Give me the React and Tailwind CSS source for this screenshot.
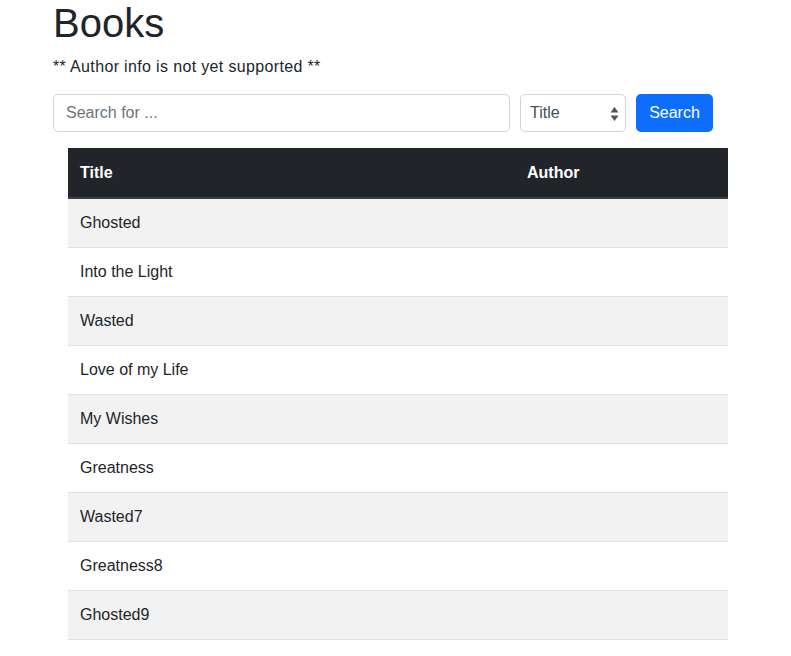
const BOOKS = ["Ghosted", "Into the Light", "Wasted", "Love of my Life", "My Wishes", "Greatness", "Wasted7", "Greatness8", "Ghosted9"];

export default function App() {
  return (
    <div className="min-h-screen bg-white text-[#212529] font-['Liberation_Sans',Arial,sans-serif]">
      <div className="pl-[53px] pr-[78px]">
        <h1 className="-mt-px mb-2 text-[40px] leading-[1.2] font-medium">Books</h1>
        <p className="mb-[15px] text-base leading-6 tracking-[0.35px]">** Author info is not yet supported **</p>

        <div className="flex items-center gap-[10px]">
          <input
            type="text"
            placeholder="Search for ..."
            className="w-[457px] h-[38px] px-3 text-base border border-[#ced4da] rounded-[5px] bg-white placeholder:text-[#6c757d] outline-none"
          />
          <div className="relative w-[106px] h-[38px] border border-[#ced4da] rounded-[5px] bg-white flex items-center px-[9px] text-base text-[#495057]">
            <span>Title</span>
            <svg className="absolute right-[6px] top-[12px]" width="9" height="14" viewBox="0 0 9 14">
              <path d="M4.5 0 L8.5 5.5 L0.5 5.5 Z" fill="#555" />
              <path d="M4.5 14 L8.5 8.5 L0.5 8.5 Z" fill="#555" />
            </svg>
          </div>
          <button className="w-[77px] h-[38px] rounded-[5px] bg-[#0d6efd] text-white text-base">Search</button>
        </div>

        <table className="mt-4 ml-[15px] w-[660px] border-collapse text-base">
          <thead>
            <tr className="bg-[#212529] text-white">
              <th className="w-[447px] h-[50px] px-3 text-left font-bold border-b-2 border-[#3a3f44]">Title</th>
              <th className="h-[50px] px-3 text-left font-bold border-b-2 border-[#3a3f44]">Author</th>
            </tr>
          </thead>
          <tbody>
            {BOOKS.map((b, i) => (
              <tr key={b} className={i % 2 === 0 ? "bg-[#f2f2f2]" : "bg-white"}>
                <td className="h-[49px] px-3 border-b border-[#dee2e6]">{b}</td>
                <td className="h-[49px] px-3 border-b border-[#dee2e6]"></td>
              </tr>
            ))}
          </tbody>
        </table>
      </div>
    </div>
  );
}
